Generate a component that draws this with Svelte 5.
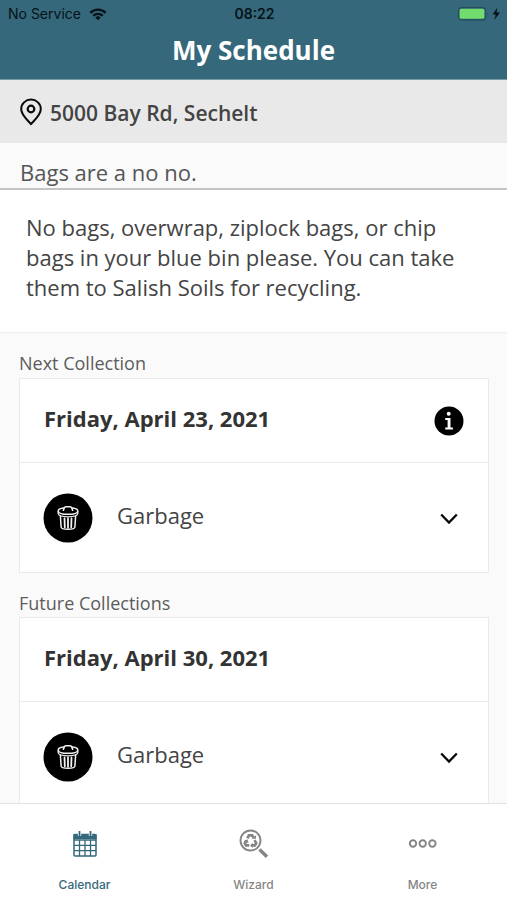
<script>
  const sections = [
    { title: 'Next Collection', date: 'Friday, April 23, 2021', info: true, items: ['Garbage'] },
    { title: 'Future Collections', date: 'Friday, April 30, 2021', info: false, items: ['Garbage'] }
  ];
  const tabs = [
    { id: 'calendar', label: 'Calendar' },
    { id: 'wizard', label: 'Wizard' },
    { id: 'more', label: 'More' }
  ];
  let active = $state('calendar');
</script>

<div class="app">
  <header>
    <div class="status">
      <div class="network">
        <span>No Service</span>
        <svg width="18" height="13" viewBox="0 0 18 13" aria-hidden="true">
          <g fill="none" stroke="#071218" stroke-width="2.3">
            <path d="M1.3 4.9a10.8 10.8 0 0 1 15.4 0" />
            <path d="M4.2 7.8a6.8 6.8 0 0 1 9.6 0" />
          </g>
          <path d="M9 12.3 6.2 9.6a4 4 0 0 1 5.6 0z" fill="#071218" />
        </svg>
      </div>
      <time>08:22</time>
      <div class="power">
        <svg width="43" height="14" viewBox="0 0 43 14" aria-hidden="true">
          <rect x=".7" y=".7" width="26.6" height="12.2" rx="3" fill="none" stroke="#234b5a" stroke-width="1.2" />
          <rect x="1.600" y="1.800" width="24.800" height="10" rx="1.5" fill="#72dc6e" />
          <path d="M29.500 5q1.8 2 0 4z" fill="#234b5a" />
          <path d="M39.300 .8 34.600 7.400h3.200L36.300 13l5.700-7.400h-3.400z" fill="#071218" />
        </svg>
      </div>
    </div>
    <h1>My Schedule</h1>
  </header>

  <div class="address">
    <svg width="24" height="28" viewBox="0 0 24 28" fill="none" stroke="#0a0a0a" aria-hidden="true">
      <path d="M12 26.2C9.2 22.6 2.2 17.3 2.2 11a9.8 9.4 0 0 1 19.6 0c0 6.3-7 11.6-9.8 15.2z" stroke-width="2" stroke-linejoin="round" />
      <circle cx="12" cy="11" r="3.3" stroke-width="2.2" />
    </svg>
    <span>5000 Bay Rd, Sechelt</span>
  </div>

  <main>
    <h2 class="notice-title">Bags are a no no.</h2>
    <p class="notice">No bags, overwrap, ziplock bags, or chip bags in your blue bin please. You can take them to Salish Soils for recycling.</p>

    {#each sections as section}
      <section>
        <h3>{section.title}</h3>
        <div class="card">
          <div class="date">
            <h4>{section.date}</h4>
            {#if section.info}
              <button class="info" aria-label="Collection information">
                <svg width="30" height="30" viewBox="0 0 30 30" aria-hidden="true">
                  <circle cx="15" cy="15" r="14.5" fill="#000" />
                  <circle cx="14.7" cy="7.8" r="2" fill="#fff" />
                  <path d="M11.2 12h5.3v9.500h2.400v2h-7.700v-2h2.400V14h-2.400z" fill="#fff" />
                </svg>
              </button>
            {/if}
          </div>
          {#each section.items as item}
            <button class="item">
              <svg width="50" height="50" viewBox="0 0 50 50" aria-hidden="true">
                <circle cx="25" cy="25" r="24.5" fill="#000" />
                <g fill="none" stroke="#f2f2f2" stroke-linecap="round" stroke-linejoin="round">
                  <path d="M20.500 15c-3.700.5-5.300 1.600-5.300 2.900 0 2.200 4.500 3.400 9.800 3.400s9.800-1.200 9.800-3.400c0-1.300-1.600-2.400-5.300-2.900" stroke-width="1.500" />
                  <path d="M20.400 17.300l.9-2.500q.4-1 1.500-1h4.400q1.100 0 1.500 1l.9 2.500" stroke-width="1.600" />
                  <path d="M15.200 18.300v2.500q.3 3 9.800 3t9.800-3v-2.500" stroke-width="1.300" />
                  <path d="M17.400 23.300 18.100 34q.2 2.300 6.900 2.300t6.900-2.300l.7-10.700" stroke-width="1.500" />
                  <path d="M21.500 25.300l.3 9M25 25.500v9.200M28.500 25.300l-.3 9" stroke-width="1.800" />
                </g>
              </svg>
              <span>{item}</span>
              <svg class="chevron" width="20" height="14" viewBox="0 0 20 14" aria-hidden="true">
                <path d="M2.200 3.500 10 11.500l7.800-8" fill="none" stroke="#080808" stroke-width="2.300" />
              </svg>
            </button>
          {/each}
        </div>
      </section>
    {/each}
  </main>

  <nav>
    {#each tabs as tab}
      <button class:active={active === tab.id} onclick={() => (active = tab.id)}>
        <svg width="32" height="32" viewBox="0 0 32 32" fill="none" stroke="currentColor" aria-hidden="true">
          {#if tab.id === 'calendar'}
            <path d="M4.500 6h23v5h-23z" fill="currentColor" stroke="none" />
            <rect x="5" y="6.500" width="22" height="21.500" rx="1" stroke-width="1.500" />
            <path d="M5 12h22M5 17.300h22M5 22.600h22M10.500 12v16M16 12v16M21.500 12v16" stroke-width="1.300" />
            <path d="M10.500 3v5M21.500 3v5" stroke="#fff" stroke-width="3.400" />
            <path d="M10.500 3v5M21.500 3v5" stroke-width="1.800" />
          {:else if tab.id === 'wizard'}
            <circle cx="12.500" cy="12.500" r="10" stroke-width="1.900" />
            <path d="M21.500 21.500 29 28.800" stroke-width="3.400" />
            <g stroke-width="2.700">
              <path d="m9.300 10.200 1.700-2.900h3.200l1.400 2.300" />
              <path d="m16.500 12.200 1.700 3-1.300 2.200h-3.100" />
              <path d="M11.300 17.400H8l-1.200-2.200 1.500-2.700" />
            </g>
            <g fill="currentColor" stroke="none">
              <path d="m13.700 10.700 4.200.1.300-3.600z" />
              <path d="m14.600 14.700-2.500 2.700 2.500 2.700z" />
              <path d="m5.900 13.200 3.600-2 1 3.800z" />
            </g>
          {:else}
            <circle cx="6" cy="15.500" r="3.200" stroke-width="1.900" />
            <circle cx="15.700" cy="15.500" r="3.200" stroke-width="1.900" />
            <circle cx="25.400" cy="15.500" r="3.200" stroke-width="1.900" />
          {/if}
        </svg>
        <span>{tab.label}</span>
      </button>
    {/each}
  </nav>
</div>

<style>
  :global(body) {
    margin: 0;
  }

  .app {
    display: flex;
    flex-direction: column;
    height: 100vh;
    background: #fafafa;
    color: #444;
    font-family: 'Open Sans', 'Noto Sans', sans-serif;
  }

  h1, h2, h3, h4, p {
    margin: 0;
  }

  svg {
    display: block;
    flex: none;
  }

  button {
    padding: 0;
    border: 0;
    background: none;
    color: inherit;
    font: inherit;
    cursor: pointer;
  }

  header {
    flex: none;
    background: #35687b;
    border-bottom: 1px solid #7899a5;
  }

  .status {
    display: grid;
    grid-template-columns: 1fr auto 1fr;
    align-items: center;
    height: 28px;
    padding: 0 6px 0 8px;
    color: #071218;
    font: 14px/28px Inter, sans-serif;
  }

  .network {
    display: flex;
    align-items: center;
    gap: 8px;
  }

  time {
    font-weight: 600;
  }

  .power {
    display: flex;
    justify-content: flex-end;
  }

  h1 {
    padding-bottom: 7px;
    color: #fff;
    font-size: 26px;
    line-height: 44px;
    font-weight: 700;
    text-align: center;
  }

  .address {
    display: flex;
    flex: none;
    align-items: center;
    gap: 7px;
    height: 63px;
    padding: 0 19px;
    background: #e9e9e9;
    font-size: 21px;
    line-height: 30px;
    font-weight: 600;
  }

  .address span {
    padding-top: 2px;
  }

  main {
    flex: 1;
    min-height: 0;
    overflow-y: auto;
    scrollbar-width: none;
  }

  .notice-title {
    padding: 14px 20px 1px;
    border-bottom: 2px solid #c4c4c4;
    color: #555;
    font-size: 22px;
    line-height: 30px;
    font-weight: 400;
  }

  .notice {
    padding: 22px 26px 30px;
    border-bottom: 1px solid #eee;
    background: #fff;
    font-size: 22px;
    line-height: 30px;
  }

  section {
    padding: 17px 18px 0 19px;
  }

  h3 {
    padding-bottom: 2px;
    color: #5c5c5c;
    font-size: 18px;
    line-height: 26px;
    font-weight: 400;
  }

  section + section h3 {
    padding-bottom: 1px;
  }

  .card {
    border: 1px solid #eaeaea;
    background: #fff;
  }

  .date {
    display: flex;
    align-items: center;
    justify-content: space-between;
    height: 84px;
    padding: 0 24px;
    border-bottom: 1px solid #eaeaea;
    box-sizing: border-box;
  }

  h4 {
    padding-bottom: 6px;
    color: #333;
    font-size: 22px;
    line-height: 30px;
  }

  .item {
    display: flex;
    align-items: center;
    gap: 24px;
    width: 100%;
    height: 109px;
    padding: 0 29px 0 23px;
    font-size: 22px;
    line-height: 30px;
    text-align: left;
  }

  .item span {
    padding-bottom: 6px;
  }

  .chevron {
    margin-left: auto;
  }

  nav {
    display: grid;
    grid-template-columns: repeat(3, 1fr);
    flex: none;
    height: 96px;
    border-top: 1px solid #e2e2e2;
    background: #fff;
  }

  nav button {
    display: flex;
    flex-direction: column;
    align-items: center;
    gap: 17px;
    padding-top: 24px;
    color: #858585;
    font: 500 12px/16px Inter, sans-serif;
  }

  nav .active {
    color: #35687b;
  }
</style>
